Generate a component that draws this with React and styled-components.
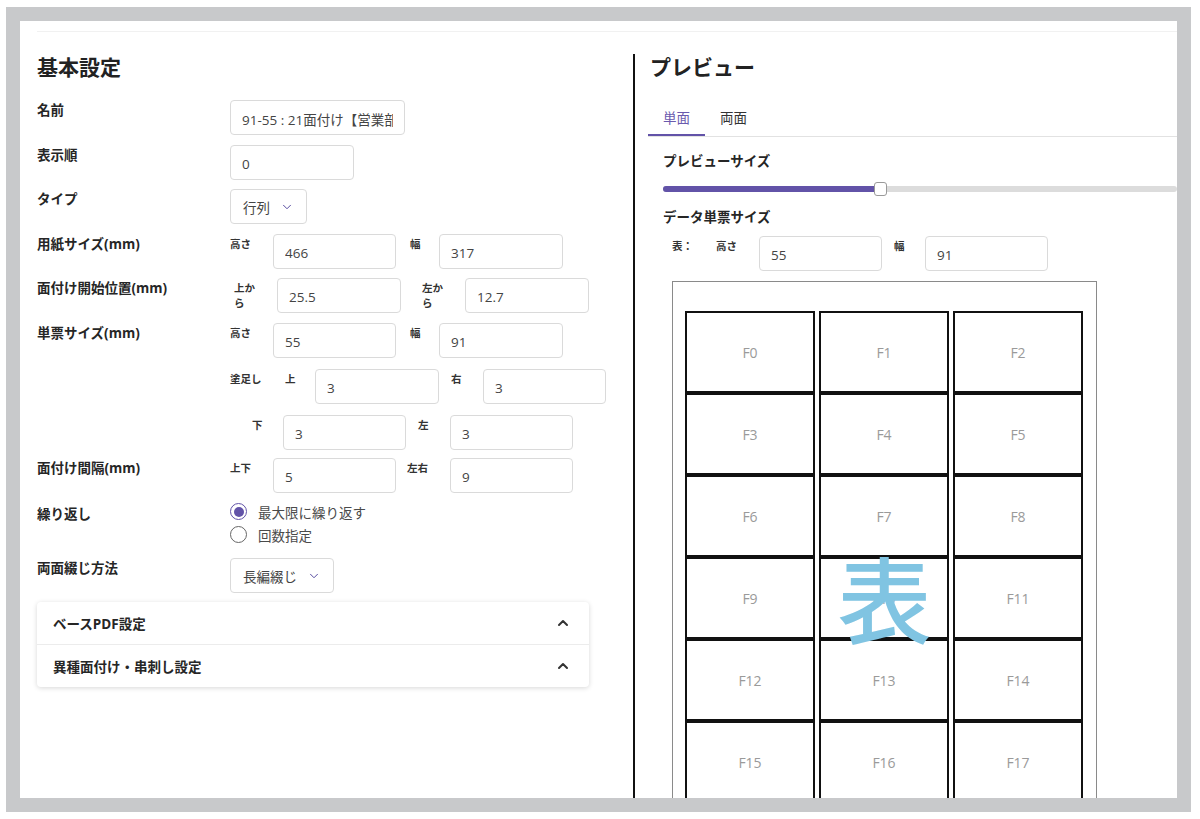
import React from 'react';
import styled, { createGlobalStyle } from 'styled-components';
import { ChevronDown, ChevronUp } from 'lucide-react';

const GlobalStyle = createGlobalStyle`
  html, body {
    margin: 0;
    background: #fff;
  }
  body {
    font-family: "Open Sans", "Noto Sans CJK JP", sans-serif;
    color: #222;
  }
`;

const PURPLE = '#6253a8';

const Frame = styled.div`
  box-sizing: border-box;
  margin: 7px 0 0 6px;
  width: 1185px;
  height: 805px;
  border: 14px solid #c8c9cb;
  overflow: hidden;
  background: #fff;
`;

const Content = styled.div`
  height: 100%;
  padding: 10px 0 0 17px;
  box-sizing: border-box;
`;

const Sheet = styled.div`
  display: flex;
  height: 100%;
  border-top: 1px solid #f1f1f1;
`;

const LeftCol = styled.section`
  width: 596px;
  flex-shrink: 0;
  padding-top: 21px;
  box-sizing: border-box;
`;

const RightCol = styled.section`
  flex: 1;
  min-width: 0;
  margin-top: 22px;
  padding-left: 13px;
  border-left: 2px solid #111;
`;

const Heading = styled.h2`
  margin: 0 0 ${(p) => p.$mb}px ${(p) => p.$ml || 0}px;
  font-size: 21px;
  font-weight: 700;
  line-height: ${(p) => p.$lh}px;
  color: #222;
`;

const Row = styled.div`
  display: flex;
  align-items: flex-start;
  margin-bottom: ${(p) => (p.$mb ?? 10)}px;
`;

const Label = styled.div`
  width: 193px;
  flex-shrink: 0;
  padding-top: ${(p) => p.$pt || 0}px;
  font-size: 13.5px;
  font-weight: 700;
  line-height: 20px;
  color: #262626;
`;

const Controls = styled.div`
  display: flex;
  align-items: flex-start;
`;

const Sub = styled.span`
  width: ${(p) => p.$w}px;
  margin-left: ${(p) => p.$ml || 0}px;
  margin-right: ${(p) => p.$mr || 0}px;
  flex-shrink: 0;
  padding-top: 3px;
  font-size: 10.5px;
  font-weight: 700;
  line-height: 15px;
  color: #333;
  word-break: break-all;
`;

const Input = styled.input`
  box-sizing: border-box;
  width: ${(p) => p.$w}px;
  height: 35px;
  padding: 2px 11px 0;
  border: 1px solid #dadada;
  border-radius: 4px;
  background: #fff;
  font-family: inherit;
  font-size: 13.5px;
  color: #444;
  outline: none;
  flex-shrink: 0;
`;

const Select = styled.div`
  box-sizing: border-box;
  height: 35px;
  display: flex;
  align-items: center;
  gap: 10px;
  padding: 0 12px 0 12px;
  border: 1px solid #dadada;
  border-radius: 4px;
  font-size: 13.5px;
  color: #444;
`;

const RadioGroup = styled.div`
  display: flex;
  flex-direction: column;
`;

const Option = styled.label`
  display: flex;
  align-items: center;
  gap: 11px;
  height: 23px;
  font-size: 13.5px;
  color: #4a4a4a;
`;

const Radio = styled.span`
  position: relative;
  box-sizing: border-box;
  width: 17px;
  height: 17px;
  border-radius: 50%;
  border: 1.5px solid ${(p) => (p.$on ? PURPLE : '#666')};

  &::after {
    content: '';
    display: ${(p) => (p.$on ? 'block' : 'none')};
    position: absolute;
    inset: 2.5px;
    border-radius: 50%;
    background: ${PURPLE};
  }
`;

const Accordion = styled.div`
  width: 552px;
  border-radius: 4px;
  box-shadow: 0 1px 5px rgba(0, 0, 0, 0.16);
  background: #fff;
`;

const AccordionItem = styled.div`
  height: 42px;
  display: flex;
  align-items: center;
  justify-content: space-between;
  padding: 0 18px 0 16px;
  font-size: 13.5px;
  font-weight: 700;
  color: #262626;
  & + & {
    border-top: 1px solid #ececec;
  }
`;

const TabBar = styled.div`
  display: flex;
  border-bottom: 1px solid #e2e2e2;
`;

const Tab = styled.div`
  padding: 2px 15px 0;
  line-height: 35px;
  font-size: 13.5px;
  color: ${(p) => (p.$active ? '#6a5aae' : '#333')};
  box-shadow: ${(p) => (p.$active ? `inset 0 -2px 0 ${PURPLE}` : 'none')};
`;

const Body = styled.div`
  padding-left: 15px;
`;

const SectionTitle = styled.div`
  margin-top: ${(p) => p.$mt}px;
  font-size: 13.5px;
  font-weight: 700;
  line-height: 20px;
  color: #262626;
`;

const Slider = styled.div`
  position: relative;
  margin-top: 10px;
  height: 16px;
  display: flex;
  align-items: center;
`;

const Track = styled.div`
  width: 100%;
  height: 6px;
  border-radius: 3px;
  background: #dcdcdc;
  overflow: hidden;
`;

const Fill = styled.div`
  height: 100%;
  background: ${PURPLE};
`;

const Thumb = styled.div`
  position: absolute;
  top: 1px;
  width: 13px;
  height: 14px;
  box-sizing: border-box;
  border: 1px solid #9a9a9a;
  border-radius: 3px;
  background: #fff;
`;

const DataRow = styled.div`
  display: flex;
  align-items: flex-start;
  margin-top: 9px;
`;

const Paper = styled.div`
  position: relative;
  box-sizing: border-box;
  width: 425px;
  height: 630px;
  margin: 10px 0 0 9px;
  padding: 29px 0 0 12px;
  border: 1px solid #8a8a8a;
`;

const Grid = styled.div`
  display: grid;
  grid-template-columns: repeat(3, 130px);
  grid-auto-rows: 82px;
  column-gap: 4px;
`;

const Cell = styled.div`
  box-sizing: border-box;
  border: 2px solid #111;
  display: flex;
  align-items: center;
  justify-content: center;
  font-size: 14px;
  color: #9a9a9a;
`;

const SideMark = styled.div`
  position: absolute;
  inset: 0;
  display: flex;
  align-items: center;
  justify-content: center;
  font-family: "Noto Sans CJK JP", sans-serif;
  font-size: 94px;
  font-weight: 500;
  line-height: 1;
  color: #80c4e2;
  pointer-events: none;
`;

const Caret = () => <ChevronUp size={16} strokeWidth={3} color="#333" />;

const Drop = () => <ChevronDown size={14} strokeWidth={1.6} color="#4b3f9a" />;

const Field = ({ label, w }) => <Input $w={w} defaultValue={label} readOnly />;

const App = () => {
  const cells = Array.from({ length: 21 }, (_, i) => `F${i}`);

  return (
    <>
      <GlobalStyle />
      <Frame>
        <Content>
          <Sheet>
            <LeftCol>
              <Heading $lh={28} $mb={19}>基本設定</Heading>

              <Row>
                <Label>名前</Label>
                <Field w={175} label="91-55 : 21面付け【営業部】" />
              </Row>
              <Row $mb={9}>
                <Label>表示順</Label>
                <Field w={124} label="0" />
              </Row>
              <Row>
                <Label>タイプ</Label>
                <Select>
                  行列 <Drop />
                </Select>
              </Row>
              <Row $mb={9}>
                <Label>用紙サイズ(mm)</Label>
                <Controls>
                  <Sub $w={22} $mr={21}>高さ</Sub>
                  <Field w={123} label="466" />
                  <Sub $ml={14} $w={11} $mr={18}>幅</Sub>
                  <Field w={124} label="317" />
                </Controls>
              </Row>
              <Row>
                <Label>面付け開始位置(mm)</Label>
                <Controls>
                  <Sub $ml={4} $w={22} $mr={21}>上から</Sub>
                  <Field w={124} label="25.5" />
                  <Sub $ml={21} $w={22} $mr={21}>左から</Sub>
                  <Field w={124} label="12.7" />
                </Controls>
              </Row>
              <Row $mb={11}>
                <Label>単票サイズ(mm)</Label>
                <Controls>
                  <Sub $w={22} $mr={21}>高さ</Sub>
                  <Field w={123} label="55" />
                  <Sub $ml={14} $w={11} $mr={18}>幅</Sub>
                  <Field w={124} label="91" />
                </Controls>
              </Row>
              <Row $mb={11}>
                <Label />
                <Controls>
                  <Sub $w={33} $mr={22}>塗足し</Sub>
                  <Sub $w={11} $mr={19}>上</Sub>
                  <Field w={124} label="3" />
                  <Sub $ml={12} $w={11} $mr={21}>右</Sub>
                  <Field w={123} label="3" />
                </Controls>
              </Row>
              <Row $mb={8}>
                <Label />
                <Controls>
                  <Sub $ml={22} $w={11} $mr={20}>下</Sub>
                  <Field w={123} label="3" />
                  <Sub $ml={12} $w={11} $mr={21}>左</Sub>
                  <Field w={123} label="3" />
                </Controls>
              </Row>
              <Row $mb={7}>
                <Label>面付け間隔(mm)</Label>
                <Controls>
                  <Sub $w={22} $mr={21}>上下</Sub>
                  <Field w={123} label="5" />
                  <Sub $ml={11} $w={22} $mr={21}>左右</Sub>
                  <Field w={123} label="9" />
                </Controls>
              </Row>
              <Row $mb={12}>
                <Label $pt={4}>繰り返し</Label>
                <RadioGroup>
                  <Option>
                    <Radio $on />
                    最大限に繰り返す
                  </Option>
                  <Option>
                    <Radio />
                    回数指定
                  </Option>
                </RadioGroup>
              </Row>
              <Row $mb={9}>
                <Label>両面綴じ方法</Label>
                <Select>
                  長編綴じ <Drop />
                </Select>
              </Row>

              <Accordion>
                <AccordionItem>
                  ベースPDF設定
                  <Caret />
                </AccordionItem>
                <AccordionItem>
                  異種面付け・串刺し設定
                  <Caret />
                </AccordionItem>
              </Accordion>
            </LeftCol>

            <RightCol>
              <Heading $lh={26} $mb={19} $ml={2}>プレビュー</Heading>
              <TabBar>
                <Tab $active>単面</Tab>
                <Tab>両面</Tab>
              </TabBar>
              <Body>
                <SectionTitle $mt={14}>プレビューサイズ</SectionTitle>
                <Slider>
                  <Track>
                    <Fill style={{ width: '217px' }} />
                  </Track>
                  <Thumb style={{ left: '211px' }} />
                </Slider>
                <SectionTitle $mt={10}>データ単票サイズ</SectionTitle>
                <DataRow>
                  <Sub $ml={9} $w={22} $mr={22}>表：</Sub>
                  <Sub $w={22} $mr={21}>高さ</Sub>
                  <Field w={123} label="55" />
                  <Sub $ml={12} $w={11} $mr={20}>幅</Sub>
                  <Field w={123} label="91" />
                </DataRow>
                <Paper>
                  <Grid>
                    {cells.map((c) => (
                      <Cell key={c}>{c}</Cell>
                    ))}
                  </Grid>
                  <SideMark>表</SideMark>
                </Paper>
              </Body>
            </RightCol>
          </Sheet>
        </Content>
      </Frame>
    </>
  );
};

export default App;
